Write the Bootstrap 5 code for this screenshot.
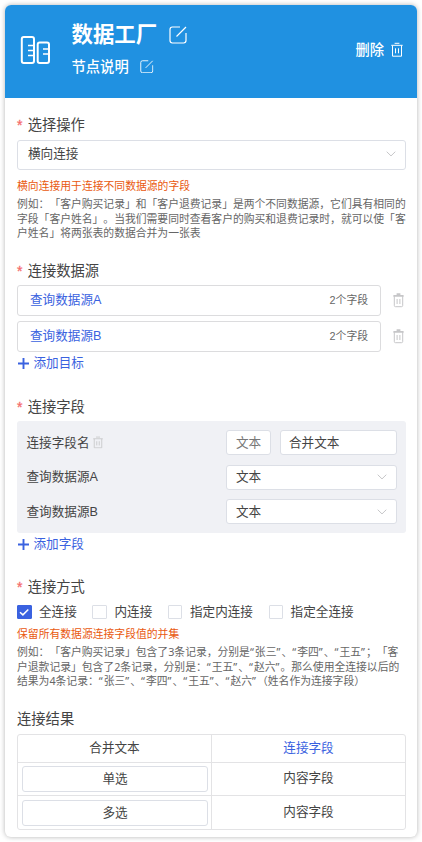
<!DOCTYPE html>
<html lang="zh-CN">
<head>
<meta charset="utf-8">
<meta name="viewport" content="width=device-width, initial-scale=1">
<title>数据工厂</title>
<link href="https://cdn.jsdelivr.net/npm/bootstrap@5.3.0/dist/css/bootstrap.min.css" rel="stylesheet">
<style>
body{font-family:"Liberation Sans","Noto Sans CJK SC",sans-serif;font-size:12.6px;color:#444;background:#fff;text-spacing-trim:space-all;font-kerning:none;line-height:20px;white-space:nowrap;overflow:hidden}
svg{display:block;flex:none;fill:none;stroke:currentColor}
.panel{width:412px;height:832px;margin:5px;border-radius:6px;box-shadow:0 0 5px rgba(0,0,0,.3)}
.head{height:93px;background:#2091e1;padding:0 14px 4px 15px}
.names{padding:0 0 3px 21.5px}
.title{font-size:21.4px;font-weight:700;line-height:30px;gap:11.5px}
.sub{font-size:14.3px;font-weight:500;line-height:20px}
.desc{margin-top:7px;gap:11.5px}
.remove{gap:7px}
.main{padding:17px 11px 0 12px}
.label{font-size:14.3px;height:20px;color:#444}
.star{color:#f56c6c;font-size:14px;width:10.7px;line-height:20px;-webkit-text-stroke:.3px #f56c6c}
.box{background:#fff;border:1px solid #dcdfe6;border-radius:3px}
.pick{height:30px;padding:0 9px 2px 10px;margin-top:5px}
.tip{font-size:10.82px;line-height:14px;height:14px;color:#e9590f}
.note{font-size:10.8px;line-height:14.6px;height:44px;margin-top:4px;color:#666}
.note.quoted{font-family:"Noto Sans","Noto Sans CJK SC",sans-serif}
.qm{letter-spacing:1.05px}
.source{width:364px;height:31px;padding:0 12px 1px 12px;border-color:#dcdcde}
.count{font-size:10.8px;color:#666}
.blue{color:#3a62e0}
.bin{color:#c6c6c8}
.side{margin-right:2.5px}
.add{height:20px;margin-top:1px}
.add svg{margin:1px 5px 0 .5px}
.fields{height:112px;margin-top:4px;background:#f0f1f5;border-radius:3px;padding:9px 9px 9px 9.5px}
.fields .box{height:25px;padding:0 9px}
.wide{width:171px}
.checks{margin-top:5px;gap:15.7px}
.checks>div{gap:7.5px}
.tick{width:14.5px;height:14.5px;border:1px solid #dcdfe6;border-radius:1px;background:#fff}
.tick.on{background:#3a62e0;border-color:#3a62e0;color:#fff}
.result{height:96px;margin-top:5px;border:1px solid #e3e3e5;border-radius:3px;display:grid;grid-template-columns:194px 1fr;grid-template-rows:28px 33px 33px;text-align:center}
.cell{border-bottom:1px solid #e3e3e5;display:flex;align-items:center;justify-content:center;padding-bottom:2px}
.cell:nth-child(odd){border-right:1px solid #e3e3e5}
.cell.field{padding:0 3px 0 4px}
.cell:nth-last-child(-n+2){border-bottom:0}
.cell .box{width:100%;height:26px;line-height:25px}
</style>
</head>
<body>
<svg width="0" height="0" class="position-absolute">
<symbol id="edit" viewBox="0 0 18 18"><path d="M11 1H3.4Q1 1 1 3.4v11.2Q1 17 3.4 17h11.2q2.4 0 2.4-2.4V7M7.5 10.5 17 1" stroke-width="1.2"/></symbol>
<symbol id="bin" viewBox="0 0 12 15"><path d="M.3 3.3h11.4M3.6 1.3h4.8M1.5 3.5v10.7h9V3.5M4.5 6.3v5M7.5 6.3v5"/></symbol>
<symbol id="binfull" viewBox="0 0 11 15"><path d="M.4 2.8h10.2M3.6 1.2h3.8" stroke-width="1.7"/><path d="M1.3 3v9.5q0 1.2 1.2 1.2h6q1.2 0 1.2-1.2V3M4.1 6v5M6.9 6v5"/></symbol>
<symbol id="down" viewBox="0 0 10 6"><path d="m.7.7 4.3 4.2L9.3.7"/></symbol>
<symbol id="plus" viewBox="0 0 11 11"><path d="M5.5 0v11M0 5.5h11" stroke-width="1.9"/></symbol>
</svg>
<div class="panel overflow-hidden bg-white">
  <header class="head d-flex align-items-center text-white">
    <svg width="30" height="30" viewBox="0 0 30 30" stroke-width="2" stroke-linejoin="round"><rect x="1.8" y="2" width="12.2" height="26" rx="2"/><rect x="17.7" y="7.6" width="11.3" height="20.4" rx="2"/><path d="M8 10.5h6M8 15.5h6M8 20.5h6M23 14h6M23 19h6" stroke-width="1.6"/></svg>
    <div class="names flex-fill">
      <div class="title d-flex align-items-center">数据工厂<svg width="18" height="18"><use href="#edit"/></svg></div>
      <div class="sub desc d-flex align-items-center">节点说明<svg width="13.5" height="13.5"><use href="#edit"/></svg></div>
    </div>
    <div class="sub remove d-flex align-items-center">删除<svg width="12" height="15"><use href="#bin"/></svg></div>
  </header>
  <main class="main">
    <div class="label d-flex"><span class="star">*</span>选择操作</div>
    <div class="box pick d-flex align-items-center justify-content-between">横向连接<svg class="bin" width="10" height="6"><use href="#down"/></svg></div>
    <div class="tip" style="margin-top:9px">横向连接用于连接不同数据源的字段</div>
    <div class="note">例如：「客户购买记录」和「客户退费记录」是两个不同数据源，它们具有相同的<br>字段「客户姓名」。当我们需要同时查看客户的购买和退费记录时，就可以使「客<br>户姓名」将两张表的数据合并为一张表</div>

    <div class="label d-flex" style="margin-top:20px"><span class="star">*</span>连接数据源</div>
    <div class="d-flex align-items-center justify-content-between mt-1"><div class="box source d-flex align-items-center justify-content-between"><span class="blue">查询数据源A</span><span class="count">2个字段</span></div><svg class="bin side" width="11" height="15"><use href="#binfull"/></svg></div>
    <div class="d-flex align-items-center justify-content-between" style="margin-top:5px"><div class="box source d-flex align-items-center justify-content-between"><span class="blue">查询数据源B</span><span class="count">2个字段</span></div><svg class="bin side" width="11" height="15"><use href="#binfull"/></svg></div>
    <div class="add blue d-flex align-items-center"><svg width="11" height="11"><use href="#plus"/></svg>添加目标</div>

    <div class="label d-flex" style="margin-top:24px"><span class="star">*</span>连接字段</div>
    <div class="fields d-flex flex-column justify-content-between">
      <div class="d-flex align-items-center"><span>连接字段名</span><svg class="bin" width="10" height="12.5" style="margin-left:4px"><use href="#bin"/></svg>
        <div class="box ms-auto d-flex align-items-center justify-content-center" style="width:45px;color:#777">文本</div><div class="box d-flex align-items-center" style="width:117px;margin-left:9px;padding-left:8px">合并文本</div></div>
      <div class="d-flex align-items-center justify-content-between">查询数据源A<div class="box wide d-flex align-items-center justify-content-between">文本<svg class="bin" width="10" height="6"><use href="#down"/></svg></div></div>
      <div class="d-flex align-items-center justify-content-between">查询数据源B<div class="box wide d-flex align-items-center justify-content-between">文本<svg class="bin" width="10" height="6"><use href="#down"/></svg></div></div>
    </div>
    <div class="add blue d-flex align-items-center"><svg width="11" height="11"><use href="#plus"/></svg>添加字段</div>

    <div class="label d-flex" style="margin-top:23px"><span class="star">*</span>连接方式</div>
    <div class="checks d-flex">
      <div class="d-flex align-items-center"><span class="tick on"><svg width="12" height="12" viewBox="0 0 12 12" stroke-width="1.5"><path d="m2 6.2 2.9 2.7 5.4-5.4"/></svg></span>全连接</div>
      <div class="d-flex align-items-center"><span class="tick"></span>内连接</div>
      <div class="d-flex align-items-center"><span class="tick"></span>指定内连接</div>
      <div class="d-flex align-items-center"><span class="tick"></span>指定全连接</div>
    </div>
    <div class="tip" style="margin-top:5px">保留所有数据源连接字段值的并集</div>
    <div class="note quoted">例如：「客户购买记录」包含了3条记录，分别是<span class="qm">“</span>张三<span class="qm">”</span>、<span class="qm">“</span>李四<span class="qm">”</span>、<span class="qm">“</span>王五<span class="qm">”</span>；「客<br>户退款记录」包含了2条记录，分别是：<span class="qm">“</span>王五<span class="qm">”</span>、<span class="qm">“</span>赵六<span class="qm">”</span>。那么使用全连接以后的<br>结果为4条记录：<span class="qm">“</span>张三<span class="qm">”</span>、<span class="qm">“</span>李四<span class="qm">”</span>、<span class="qm">“</span>王五<span class="qm">”</span>、<span class="qm">“</span>赵六<span class="qm">”</span>（姓名作为连接字段）</div>

    <div class="label" style="margin-top:20px">连接结果</div>
    <div class="result">
      <div class="cell">合并文本</div><div class="cell blue">连接字段</div>
      <div class="cell field"><div class="box">单选</div></div><div class="cell">内容字段</div>
      <div class="cell field"><div class="box">多选</div></div><div class="cell">内容字段</div>
    </div>
  </main>
</div>
<script src="https://cdn.jsdelivr.net/npm/bootstrap@5.3.0/dist/js/bootstrap.bundle.min.js"></script>
</body>
</html>
